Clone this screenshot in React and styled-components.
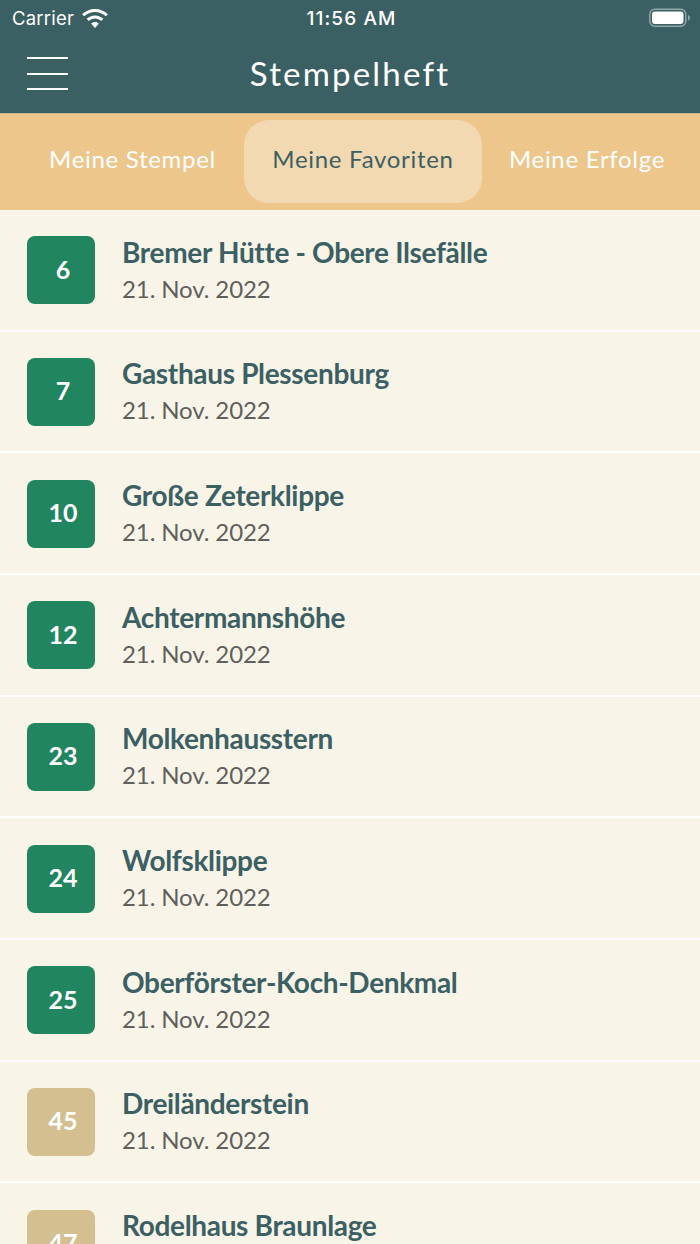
import React from 'react';
import styled, { createGlobalStyle } from 'styled-components';

const Global = createGlobalStyle`
  html, body { margin: 0; padding: 0; background: #f8f4e8; }
  body { font-family: "Lato", sans-serif; overflow: hidden; }
`;

const Page = styled.div`
  width: 700px;
  height: 1244px;
  overflow: hidden;
  background: #f8f4e8;
`;

const Header = styled.header`
  height: 113px;
  background: #3b6063;
  color: #fff;
  display: flex;
  flex-direction: column;
`;

const StatusBar = styled.div`
  height: 36px;
  display: grid;
  grid-template-columns: 1fr auto 1fr;
  align-items: center;
  padding: 0 9px 0 12px;
  font-family: "Inter", sans-serif;
  font-size: 19px;
`;

const Carrier = styled.div`
  display: flex;
  align-items: center;
  gap: 8px;
  font-size: 18.5px;
  letter-spacing: 0.2px;
`;

const Clock = styled.div`
  font-weight: 500;
  letter-spacing: 1.1px;
`;

const BatteryWrap = styled.div`
  justify-self: end;
  display: flex;
`;

const NavRow = styled.div`
  flex: 1;
  position: relative;
  display: flex;
  align-items: center;
  justify-content: center;
  padding-bottom: 3px;
`;

const Burger = styled.div`
  position: absolute;
  left: 27px;
  top: 21px;
  width: 41px;
  display: flex;
  flex-direction: column;
  gap: 13.5px;
`;

const BurgerLine = styled.span`
  display: block;
  height: 2px;
  background: #fff;
`;

const Title = styled.h1`
  margin: 0;
  font-size: 33px;
  font-weight: 400;
  letter-spacing: 2.2px;
`;

const Tabs = styled.nav`
  height: 97px;
  box-sizing: border-box;
  background: #edc68c;
  border-top: 1px solid #c9b88a;
  display: flex;
  align-items: center;
  padding: 0 0 2px 27px;
`;

const Tab = styled.div`
  height: 83px;
  box-sizing: border-box;
  width: ${p => p.$w}px;
  padding: 0 ${p => p.$shift || 0}px 5px 0;
  display: flex;
  align-items: center;
  justify-content: center;
  border-radius: 25px;
  font-size: 24px;
  letter-spacing: 0.7px;
  color: ${p => (p.$active ? '#3b6063' : '#fff')};
  background: ${p => (p.$active ? '#f3d9b2' : 'transparent')};
`;

const Row = styled.div`
  height: 121.67px;
  box-sizing: border-box;
  border-bottom: 2px solid #fff;
  display: flex;
  align-items: center;
  gap: 27px;
  padding: 1px 27px 0;
`;

const Badge = styled.div`
  width: 68px;
  height: 68px;
  flex: none;
  border-radius: 8px;
  background: ${p => (p.$tan ? '#d3bf90' : '#21855f')};
  color: #fff;
  font-size: 25px;
  font-weight: 700;
  display: flex;
  align-items: center;
  justify-content: center;
  padding: 0 0 3px 4px;
  box-sizing: border-box;
`;

const Texts = styled.div`
  display: flex;
  flex-direction: column;
  gap: 6px;
`;

const Name = styled.div`
  font-size: 28px;
  line-height: 31px;
  font-weight: 700;
  letter-spacing: -0.33px;
  color: #3b6063;
`;

const DateText = styled.div`
  font-size: 24px;
  line-height: 30px;
  color: #5f5f5c;
  letter-spacing: -0.1px;
`;

const Wifi = () => (
  <svg width="26" height="19" viewBox="1.800 0.500 22.400 16.500" fill="#fff">
    <path d="M13 3.200c3.600 0 6.900 1.400 9.400 3.700l1.800-1.900C21.200 2.200 17.300.5 13 .5S4.800 2.200 1.800 5l1.800 1.900C6.100 4.600 9.400 3.200 13 3.200z" />
    <path d="M13 8.800c2.100 0 4 .8 5.400 2.100l1.900-1.900C18.400 7.200 15.800 6.100 13 6.100S7.600 7.200 5.700 9l1.900 1.900C9 9.600 10.900 8.800 13 8.800z" />
    <path d="M13 11.700c-1.300 0-2.500.5-3.400 1.300l3.400 4 3.400-4c-.9-.8-2.100-1.300-3.400-1.300z" />
  </svg>
);

const Battery = () => (
  <svg width="42" height="20" viewBox="0 0 42 20">
    <rect x="0.800" y="1.200" width="36" height="17" rx="5" fill="none" stroke="#fff" strokeOpacity="0.45" strokeWidth="1.400" />
    <rect x="3" y="3.400" width="31.500" height="12.600" rx="3" fill="#fff" />
    <path d="M39 7v5.500c1.200-.4 2-1.500 2-2.750S40.200 7.400 39 7z" fill="#fff" fillOpacity="0.45" />
  </svg>
);

const stamps = [
  ['6', 'Bremer Hütte - Obere Ilsefälle'],
  ['7', 'Gasthaus Plessenburg'],
  ['10', 'Große Zeterklippe'],
  ['12', 'Achtermannshöhe'],
  ['23', 'Molkenhausstern'],
  ['24', 'Wolfsklippe'],
  ['25', 'Oberförster-Koch-Denkmal'],
  ['45', 'Dreiländerstein', true],
  ['47', 'Rodelhaus Braunlage', true],
];

export default function App() {
  return (
    <Page>
      <Global />
      <Header>
        <StatusBar>
          <Carrier>Carrier <Wifi /></Carrier>
          <Clock>11:56 AM</Clock>
          <BatteryWrap><Battery /></BatteryWrap>
        </StatusBar>
        <NavRow>
          <Burger><BurgerLine /><BurgerLine /><BurgerLine /></Burger>
          <Title>Stempelheft</Title>
        </NavRow>
      </Header>
      <Tabs>
        <Tab $w={217} $shift={6}>Meine Stempel</Tab>
        <Tab $w={238} $active>Meine Favoriten</Tab>
        <Tab $w={210}>Meine Erfolge</Tab>
      </Tabs>
      {stamps.map(([n, name, tan]) => (
        <Row key={n}>
          <Badge $tan={tan}>{n}</Badge>
          <Texts>
            <Name>{name}</Name>
            <DateText>21. Nov. 2022</DateText>
          </Texts>
        </Row>
      ))}
    </Page>
  );
}
